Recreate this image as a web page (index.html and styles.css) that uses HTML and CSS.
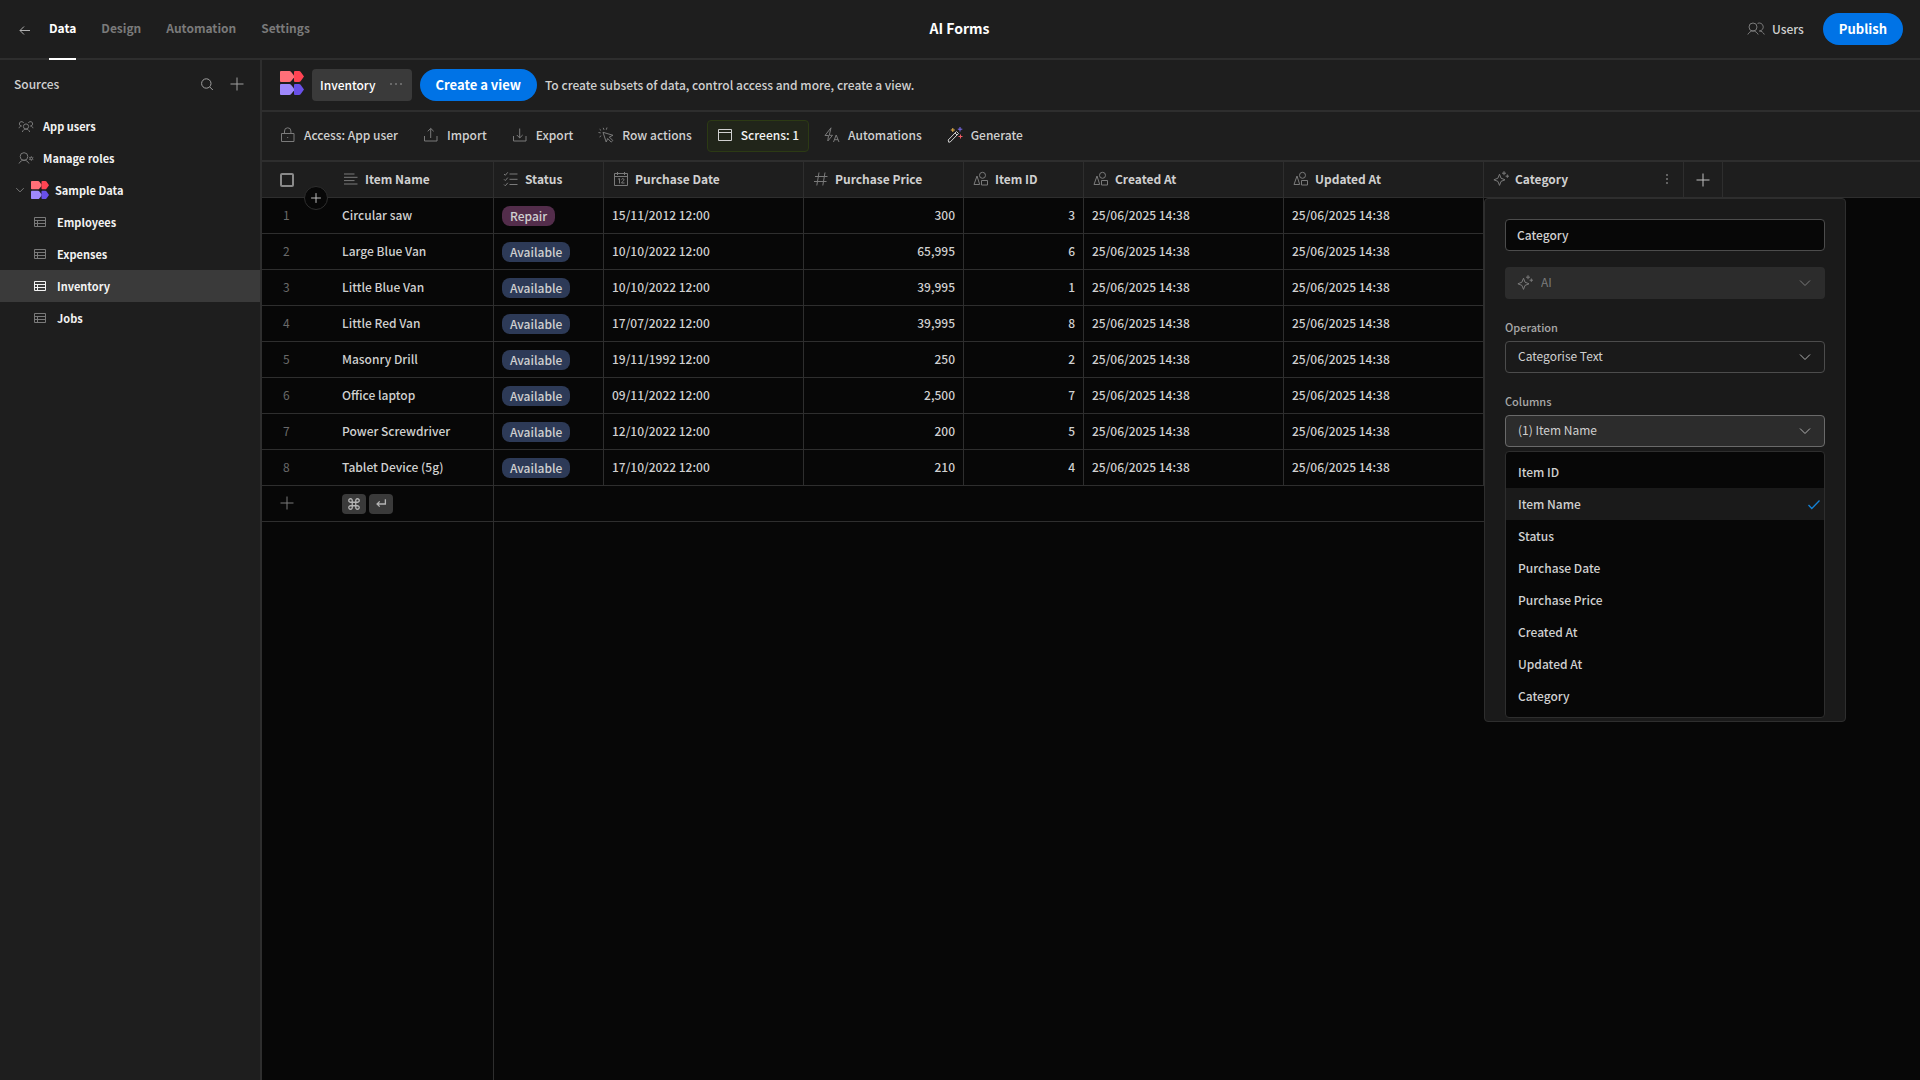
FILE: index.html
```html
<!DOCTYPE html>
<html lang="en">
<head>
<meta charset="utf-8">
<title>AI Forms</title>
<meta name="viewport" content="width=device-width, initial-scale=1">
<link rel="stylesheet" href="styles.css">
</head>
<body>
<svg class="sprite" aria-hidden="true">
  <symbol id="logo" viewBox="0 0 24 24">
    <path fill="#ff6f78" d="M0 1a1 1 0 0 1 1-1h8.500a2 2 0 0 1 1.500.7L14 4.500v2L11 10.300a2 2 0 0 1-1.500.7H1a1 1 0 0 1-1-1z"/>
    <path fill="#ff4453" d="M14 1a1 1 0 0 1 1-1h4a2 2 0 0 1 1.600.8L24 5.500l-3.400 4.700A2 2 0 0 1 19 11h-4a1 1 0 0 1-1-1z"/>
    <path fill="#9e88fb" d="M0 14a1 1 0 0 1 1-1h8.500a2 2 0 0 1 1.500.7l3 3.800v2l-3 3.800a2 2 0 0 1-1.500.7H1a1 1 0 0 1-1-1z"/>
    <path fill="#6950e8" d="M14 14a1 1 0 0 1 1-1h4a2 2 0 0 1 1.600.8l3.400 4.700-3.400 4.700A2 2 0 0 1 19 24h-4a1 1 0 0 1-1-1z"/>
  </symbol>
  <symbol id="plus" viewBox="0 0 16 16"><path d="M8 1.500v13M1.500 8h13"/></symbol>
  <symbol id="chevron" viewBox="0 0 16 16"><path d="M3 5.500 8 10.500 13 5.500"/></symbol>
  <symbol id="table" viewBox="0 0 16 16"><path d="M2.500 3.500h11v9h-11zM2.500 6.500h11M2.500 9.500h11M5.500 6.500v6"/></symbol>
  <symbol id="users" viewBox="0 0 18 16"><circle cx="6" cy="6" r="4"/><path d="M.8 13.500C2 11.300 3.800 10 6 10s4 1.300 5.200 3.500M10.500 2.400A4 4 0 1 1 12.300 10c2.200 0 3.900 1.300 5 3.500"/></symbol>
  <symbol id="shapes" viewBox="0 0 16 16"><circle cx="9.500" cy="4.300" r="3"/><path d="M4 5 1 13.500h5.700zM8.500 9.500h6v4.500h-6z"/></symbol>
  <symbol id="sparkle" viewBox="0 0 16 16"><path d="M6.500 3.200 8 7.200l4 1.600-4 1.600-1.500 4-1.600-4-4-1.600 4-1.600zM11 .2v4M9 2.200h4M14.300 3.500v3.400M12.600 5.200H16"/></symbol>
</svg>

<header class="topbar">
  <nav class="tabs" aria-label="Workspace">
    <a class="back" href="#" aria-label="Back"><svg class="icon" viewBox="0 0 16 16"><path d="M14 8.500H4M8 4.500l-4 4 4 4"/></svg></a>
    <a class="tab tab-active" href="#">Data</a>
    <a class="tab" href="#">Design</a>
    <a class="tab" href="#">Automation</a>
    <a class="tab" href="#">Settings</a>
  </nav>
  <h1 class="app-name">AI Forms</h1>
  <div class="top-actions">
    <button class="users-button" type="button"><svg class="icon icon-wide"><use href="#users"/></svg>Users</button>
    <button class="cta publish" type="button">Publish</button>
  </div>
</header>

<div class="workspace">
  <aside class="sidebar">
    <div class="sidebar-head">
      <h2 class="sidebar-title">Sources</h2>
      <button class="icon-button" type="button" aria-label="Search"><svg class="icon" viewBox="0 0 16 16"><circle cx="7.300" cy="7.500" r="4.700"/><path d="m10.800 11 3 3"/></svg></button>
      <button class="icon-button" type="button" aria-label="Add source"><svg class="icon"><use href="#plus"/></svg></button>
    </div>
    <nav class="source-list" aria-label="Sources">
      <a class="source" href="#"><svg class="icon" viewBox="0 0 16 16"><circle cx="8" cy="8.500" r="2.600"/><path d="M4.300 14C5 12 6.300 11.100 8 11.100s3 .9 3.700 2.900M1 10.200C1.600 8.500 2.300 8 3.500 8A2.200 2.200 0 1 1 5.600 5M15 10.200C14.400 8.500 13.700 8 12.500 8a2.200 2.200 0 1 0-2.100-3"/></svg>App users</a>
      <a class="source" href="#"><svg class="icon" viewBox="0 0 16 16"><circle cx="6" cy="6.500" r="3.800"/><path d="M1 13.500c1.200-2.200 2.800-3.200 5-3.200s3.800 1 5 3.200"/><circle cx="13.300" cy="8.500" r="1.200"/><path d="M13.300 6.300v1M13.300 9.700v1M11.300 7.400l.9.500M14.400 9.100l.9.500M15.300 7.400l-.9.500M12.200 9.100l-.9.500"/></svg>Manage roles</a>
      <a class="source source-group" href="#"><svg class="icon icon-small"><use href="#chevron"/></svg><svg class="logo-small"><use href="#logo"/></svg>Sample Data</a>
      <a class="source source-table" href="#"><svg class="icon"><use href="#table"/></svg>Employees</a>
      <a class="source source-table" href="#"><svg class="icon"><use href="#table"/></svg>Expenses</a>
      <a class="source source-table source-active" href="#"><svg class="icon"><use href="#table"/></svg>Inventory</a>
      <a class="source source-table" href="#"><svg class="icon"><use href="#table"/></svg>Jobs</a>
    </nav>
  </aside>

  <main class="content">
    <div class="view-bar">
      <svg class="logo"><use href="#logo"/></svg>
      <button class="view-tab" type="button">Inventory<svg class="icon dots" viewBox="0 0 16 16"><circle cx="3" cy="7" r="1"/><circle cx="8" cy="7" r="1"/><circle cx="13" cy="7" r="1"/></svg></button>
      <button class="cta" type="button">Create a view</button>
      <p class="view-hint">To create subsets of data, control access and more, create a view.</p>
    </div>

    <div class="toolbar">
      <button class="tool" type="button"><svg class="icon" viewBox="0 0 16 16"><path d="M1.500 6.500h12.500v8H1.500zM4.500 6.500V4a3.200 3.200 0 0 1 6.400 0v2.500M7.700 10v1"/></svg>Access: App user</button>
      <button class="tool" type="button"><svg class="icon" viewBox="0 0 16 16"><path d="M1.500 9v5H14V9M7.700 11V1.500M4.800 4.300l2.900-2.900 3 2.900"/></svg>Import</button>
      <button class="tool" type="button"><svg class="icon" viewBox="0 0 16 16"><path d="M1.500 9v5H14V9M7.700 1.500v9.500M4.800 8l2.900 2.900 3-2.900"/></svg>Export</button>
      <button class="tool" type="button"><svg class="icon" viewBox="0 0 16 16"><path d="m5 5.300 10 3-3.700 1.700 3.500 3.500-1.600 1.600-3.500-3.600L8.200 15zM5.200.800l.8 2M9 .500l-.7 2.200M.500 5.500l2.200.4M1.500 10l1.700-1.200M1.600 2.200l1.500 1.300"/></svg>Row actions</button>
      <button class="tool tool-active" type="button"><svg class="icon" viewBox="0 0 16 16"><path d="M1.500 2.500h13v11h-13zM1.500 5.500h13"/></svg>Screens: 1</button>
      <button class="tool" type="button"><svg class="icon" viewBox="0 0 16 16"><path d="M7 .800 1 8.500h3.500L3.800 14l4.700-5.700H5.300zM9.500 15l2.700-7 2.800 7M10.500 12.700h3.500"/></svg>Automations</button>
      <button class="tool" type="button"><svg class="icon" viewBox="0 0 16 16"><g class="wand"><path d="m1.200 13 8.300-8.500 2 2-8.300 8.500-1.500.2zM8 6l2 2"/></g><path stroke="#e8b34a" d="M5.800 1v4M3.800 3h4"/><path stroke="#7b6cf0" d="M13 0v4.500M10.800 2.200h4.500"/><path stroke="#f05a63" d="M13.500 7.500v4M11.500 9.500h4"/></svg>Generate</button>
    </div>

    <section class="grid" aria-label="Inventory rows">
      <table class="rows">
        <colgroup>
          <col class="col-index"><col class="col-name"><col class="col-status"><col class="col-date"><col class="col-price"><col class="col-id"><col class="col-date"><col class="col-date"><col class="col-date"><col class="col-add"><col>
        </colgroup>
        <thead>
          <tr>
            <th class="index head-index"><input class="tick" type="checkbox" aria-label="Select all rows"><button class="insert" type="button" aria-label="Insert row"><svg class="icon icon-small"><use href="#plus"/></svg></button></th>
            <th class="cell"><span class="head"><svg class="icon" viewBox="0 0 16 16"><path d="M1 3h10.500M1 6.300h13.500M1 9.600h10.500M1 13h13.500"/></svg>Item Name</span></th>
            <th class="cell"><span class="head"><svg class="icon" viewBox="0 0 16 16"><path d="M6.500 3h8M6.500 8.300h8M6.500 13.500h8M1 3l1.300 1.300L4.800 1.300M1 8.300l1.300 1.300 2.500-3M1 13.500l1.300 1.300 2.500-3"/></svg>Status</span></th>
            <th class="cell"><span class="head"><svg class="icon" viewBox="0 0 16 16"><path d="M1.500 2.500h13v12h-13zM1.500 5.500h13M4.500 1v3M11.500 1v3M5 8.200l1.500-.7v5M8.500 8.500c.4-1.200 2.500-1.200 2.500.3 0 1.200-2.300 2-2.500 3.200h3"/></svg>Purchase Date</span></th>
            <th class="cell"><span class="head"><svg class="icon" viewBox="0 0 16 16"><path d="M6 1.500 3.800 14.500M12 1.500 9.800 14.500M2 5.500h12.500M1 10.500h12.500"/></svg>Purchase Price</span></th>
            <th class="cell"><span class="head"><svg class="icon"><use href="#shapes"/></svg>Item ID</span></th>
            <th class="cell"><span class="head"><svg class="icon"><use href="#shapes"/></svg>Created At</span></th>
            <th class="cell"><span class="head"><svg class="icon"><use href="#shapes"/></svg>Updated At</span></th>
            <th class="cell head-category"><span class="head"><svg class="icon"><use href="#sparkle"/></svg>Category<svg class="icon dots push" viewBox="0 0 16 16"><circle cx="8" cy="4" r="1"/><circle cx="8" cy="8" r="1"/><circle cx="8" cy="12" r="1"/></svg></span>
              <form class="popover">
                <input class="field" type="text" value="Category" aria-label="Column name">
                <div class="picker picker-disabled">
                  <svg class="icon picker-lead"><use href="#sparkle"/></svg>
                  <select class="field field-lead" aria-label="Column type" disabled><option>AI</option></select>
                  <svg class="icon picker-arrow"><use href="#chevron"/></svg>
                </div>
                <div class="group">
                  <label class="label" for="operation">Operation</label>
                  <div class="picker">
                    <select class="field" id="operation"><option>Categorise Text</option></select>
                    <svg class="icon picker-arrow"><use href="#chevron"/></svg>
                  </div>
                </div>
                <div class="group">
                  <label class="label" for="columns">Columns</label>
                  <div class="picker picker-open">
                    <select class="field" id="columns"><option>(1) Item Name</option></select>
                    <svg class="icon picker-arrow"><use href="#chevron"/></svg>
                  </div>
                </div>
                <ul class="menu" role="listbox" aria-label="Columns">
                  <li class="option" role="option">Item ID</li>
                  <li class="option option-selected" role="option" aria-selected="true">Item Name<svg class="icon check" viewBox="0 0 16 16"><path d="m2.500 9 3.300 3.500 7.700-8"/></svg></li>
                  <li class="option" role="option">Status</li>
                  <li class="option" role="option">Purchase Date</li>
                  <li class="option" role="option">Purchase Price</li>
                  <li class="option" role="option">Created At</li>
                  <li class="option" role="option">Updated At</li>
                  <li class="option" role="option">Category</li>
                </ul>
              </form>
            </th>
            <th class="cell head-add"><button class="icon-button add-column" type="button" aria-label="Add column"><svg class="icon"><use href="#plus"/></svg></button></th>
            <th class="rest"></th>
          </tr>
        </thead>
        <tbody>
          <tr><td class="index">1</td><td class="cell">Circular saw</td><td class="cell"><span class="pill pill-repair">Repair</span></td><td class="cell">15/11/2012 12:00</td><td class="cell number">300</td><td class="cell number">3</td><td class="cell">25/06/2025 14:38</td><td class="cell">25/06/2025 14:38</td><td class="cell"></td></tr>
          <tr><td class="index">2</td><td class="cell">Large Blue Van</td><td class="cell"><span class="pill">Available</span></td><td class="cell">10/10/2022 12:00</td><td class="cell number">65,995</td><td class="cell number">6</td><td class="cell">25/06/2025 14:38</td><td class="cell">25/06/2025 14:38</td><td class="cell"></td></tr>
          <tr><td class="index">3</td><td class="cell">Little Blue Van</td><td class="cell"><span class="pill">Available</span></td><td class="cell">10/10/2022 12:00</td><td class="cell number">39,995</td><td class="cell number">1</td><td class="cell">25/06/2025 14:38</td><td class="cell">25/06/2025 14:38</td><td class="cell"></td></tr>
          <tr><td class="index">4</td><td class="cell">Little Red Van</td><td class="cell"><span class="pill">Available</span></td><td class="cell">17/07/2022 12:00</td><td class="cell number">39,995</td><td class="cell number">8</td><td class="cell">25/06/2025 14:38</td><td class="cell">25/06/2025 14:38</td><td class="cell"></td></tr>
          <tr><td class="index">5</td><td class="cell">Masonry Drill</td><td class="cell"><span class="pill">Available</span></td><td class="cell">19/11/1992 12:00</td><td class="cell number">250</td><td class="cell number">2</td><td class="cell">25/06/2025 14:38</td><td class="cell">25/06/2025 14:38</td><td class="cell"></td></tr>
          <tr><td class="index">6</td><td class="cell">Office laptop</td><td class="cell"><span class="pill">Available</span></td><td class="cell">09/11/2022 12:00</td><td class="cell number">2,500</td><td class="cell number">7</td><td class="cell">25/06/2025 14:38</td><td class="cell">25/06/2025 14:38</td><td class="cell"></td></tr>
          <tr><td class="index">7</td><td class="cell">Power Screwdriver</td><td class="cell"><span class="pill">Available</span></td><td class="cell">12/10/2022 12:00</td><td class="cell number">200</td><td class="cell number">5</td><td class="cell">25/06/2025 14:38</td><td class="cell">25/06/2025 14:38</td><td class="cell"></td></tr>
          <tr><td class="index">8</td><td class="cell">Tablet Device (5g)</td><td class="cell"><span class="pill">Available</span></td><td class="cell">17/10/2022 12:00</td><td class="cell number">210</td><td class="cell number">4</td><td class="cell">25/06/2025 14:38</td><td class="cell">25/06/2025 14:38</td><td class="cell"></td></tr>
          <tr><td class="index"><button class="icon-button new-row" type="button" aria-label="Add row"><svg class="icon"><use href="#plus"/></svg></button></td><td class="cell"><span class="keys"><kbd class="key"><svg class="icon key-icon" viewBox="0 0 16 16"><path d="M6 6H4.300A2 2 0 1 1 6 4.300v7.400A2 2 0 1 1 4.300 10h7.400A2 2 0 1 1 10 11.700V4.300A2 2 0 1 1 11.700 6z"/></svg></kbd><kbd class="key"><svg class="icon key-icon" viewBox="0 0 16 16"><path d="M13 2.500V8H3.500M6.500 5l-3 3 3 3"/></svg></kbd></span></td><td class="cell" colspan="7"></td></tr>
        </tbody>
      </table>
      <div class="below-rows"></div>
    </section>
  </main>
</div>
</body>
</html>
```
FILE: styles.css
```css
:root {
  --panel: #1e1e1e;
  --ground: #070707;
  --line: #2e2e2e;
  --raised: #3a3a3a;
  --text: #d0d0d0;
  --bright: #f2f2f2;
  --muted: #7a7a7a;
  --blue: #0073e6;
}

* { box-sizing: border-box; }

body {
  margin: 0;
  min-height: 100vh;
  display: flex;
  flex-direction: column;
  background: var(--ground);
  color: var(--text);
  font: 500 12px/20px "Noto Sans CJK SC", "Noto Sans", sans-serif;
}

h1, h2, p, ul { margin: 0; padding: 0; }
a { color: inherit; text-decoration: none; }
button, input, select { font: inherit; color: inherit; margin: 0; }
button { border: 0; background: none; padding: 0; cursor: pointer; white-space: nowrap; }

.sprite { display: none; }
.icon {
  width: 16px;
  height: 16px;
  flex: none;
  fill: none;
  stroke: var(--muted);
  stroke-width: 1;
}
.icon-small { width: 12px; height: 12px; stroke-width: 1.3; }
.icon-wide { width: 18px; }
.dots { fill: var(--muted); stroke: none; }
.icon-button { display: flex; }
.logo { width: 24px; height: 24px; flex: none; }
.logo-small { width: 18px; height: 18px; flex: none; }

.cta {
  height: 32px;
  padding: 0 16px 1px;
  border-radius: 16px;
  background: var(--blue);
  color: #fff;
  font-size: 13px;
  font-weight: 700;
}

/* Top bar */
.topbar {
  height: 60px;
  display: grid;
  grid-template-columns: 1fr auto 1fr;
  align-items: center;
  padding: 0 17px 0 16px;
  background: var(--panel);
  border-bottom: 2px solid var(--line);
}
.tabs { display: flex; align-items: center; align-self: stretch; gap: 25px; margin-bottom: -2px; }
.back { display: flex; margin-right: -8px; }
.back .icon { stroke: #b0b0b0; }
.tab {
  height: 60px;
  padding: 18px 0 20px;
  border-bottom: 2px solid transparent;
  color: var(--muted);
  font-weight: 700;
}
.tab-active { color: #fff; border-color: #fff; }
.app-name { padding-bottom: 2px; font-size: 14px; font-weight: 700; color: #fff; }
.top-actions { display: flex; justify-content: flex-end; align-items: center; gap: 19px; }
.users-button { display: flex; align-items: center; gap: 7px; padding-bottom: 1px; }

/* Sidebar */
.workspace { flex: 1; display: flex; }
.sidebar { width: 262px; flex: none; background: var(--panel); border-right: 2px solid var(--line); }
.sidebar-head { display: flex; align-items: center; gap: 14px; height: 50px; padding: 0 15px 2px 14px; }
.sidebar-title { flex: 1; font-size: 12px; font-weight: 500; }
.sidebar-head .icon { stroke: #a0a0a0; }
.source {
  height: 32px;
  display: flex;
  align-items: center;
  gap: 9px;
  padding: 0 18px;
  color: var(--bright);
  font-size: 11px;
  font-weight: 700;
}
.source-group { gap: 6px; padding-left: 14px; }
.source-group .icon { margin-right: -1px; }
.source-table { padding-left: 32px; }
.source-active { background: var(--raised); }
.source-active .icon { stroke: var(--bright); }

/* View bar and toolbar */
.content { flex: 1; min-width: 0; display: flex; flex-direction: column; }
.view-bar, .toolbar {
  display: flex;
  align-items: center;
  background: var(--panel);
  border-bottom: 2px solid var(--line);
}
.view-bar { height: 52px; gap: 8px; padding: 0 18px; }
.view-bar .logo { margin-bottom: 4px; }
.view-tab {
  display: flex;
  align-items: center;
  gap: 12px;
  height: 32px;
  padding: 0 8px;
  border-radius: 4px;
  background: var(--raised);
  color: #fff;
}
.toolbar { height: 50px; gap: 5px; padding: 0 8px; }
.tool {
  height: 32px;
  display: flex;
  align-items: center;
  gap: 8px;
  padding: 0 9px 2px;
  border: 1px solid transparent;
  border-radius: 4px;
}
.tool-active { background: #21251a; border-color: #2c3a14; color: var(--bright); }
.tool-active .icon, .wand { stroke: var(--text); }

/* Grid */
.grid { flex: 1; display: flex; flex-direction: column; }
.rows { width: 100%; table-layout: fixed; border-spacing: 0; }
.col-index { width: 72px; }
.col-name { width: 160px; }
.col-status { width: 110px; }
.col-date { width: 200px; }
.col-price { width: 160px; }
.col-id { width: 120px; }
.col-add { width: 39px; }
.rows th, .rows td { height: 36px; border-bottom: 1px solid var(--line); text-align: left; }
.rows th { background: var(--panel); font-weight: 700; }
.index { padding: 0 24px 0 0; }
.rows td.index { padding: 0 24px 2px 21px; color: #6a6a6a; font-weight: 400; }
.cell { padding: 0 8px 2px; border-right: 1px solid var(--line); color: var(--text); }
.cell:has(.pill), .cell:has(.keys) { padding-bottom: 0; }
.rows .number { text-align: right; }
.rest { padding: 0; }
.head { display: flex; align-items: center; gap: 6px; padding-left: 1px; }
.push { margin-left: auto; }
.head-index, .head-category { position: relative; }
.tick {
  appearance: none;
  display: block;
  width: 14px;
  height: 14px;
  margin-left: 18px;
  border: 2px solid #8a8a8a;
  border-radius: 2px;
}
.insert {
  position: absolute;
  left: 42px;
  bottom: -13px;
  width: 24px;
  height: 24px;
  display: grid;
  place-items: center;
  border: 1px solid var(--line);
  border-radius: 50%;
  background: var(--ground);
}
.insert .icon, .add-column .icon { stroke: #c0c0c0; }
.rows .head-add { padding: 0 11px; }
.new-row { margin-left: -4px; }
.pill {
  display: block;
  width: fit-content;
  height: 20px;
  padding: 0 8px;
  border-radius: 8px;
  background: #2d3a57;
}
.pill-repair { background: #532d4b; }
.keys { display: flex; gap: 3px; }
.key { width: 24px; height: 20px; display: grid; place-items: center; border-radius: 4px; background: var(--raised); }
.key-icon { width: 14px; height: 14px; stroke: #b4b4b4; stroke-width: 1.5; }
.below-rows { flex: 1; width: 232px; border-right: 1px solid var(--line); }

/* Column editor */
.popover {
  position: absolute;
  top: 36px;
  left: 0;
  z-index: 1;
  width: 362px;
  padding: 20px 20px 3px;
  display: flex;
  flex-direction: column;
  gap: 16px;
  border: 1px solid var(--line);
  border-radius: 4px;
  background: #1a1a1a;
  font-weight: 500;
}
.field {
  appearance: none;
  width: 100%;
  height: 32px;
  padding: 0 11px 2px;
  border: 1px solid #4c4c4c;
  border-radius: 4px;
  background: var(--ground);
  opacity: 1;
}
.picker { display: grid; grid-template-columns: 32px 1fr 32px; align-items: center; }
.picker .field { grid-area: 1 / 1 / 2 / 4; padding: 0 12px 2px; background: transparent; font-weight: 400; }
.picker-arrow { grid-area: 1 / 3; justify-self: center; stroke: #b0b0b0; pointer-events: none; margin-right: 8px; }
.picker-lead { grid-area: 1 / 1; justify-self: end; }
.picker-disabled .field { padding-left: 35px; border-color: transparent; background: #2c2c2c; color: var(--muted); }
.picker-disabled .icon { z-index: 1; stroke: var(--muted); }
.picker-disabled .picker-lead { margin-right: 4px; }
.picker-open .field { background: #2c2c2c; border-color: #6a6a6a; }
.group { display: flex; flex-direction: column; gap: 4px; padding-top: 2px; }
.label { font-size: 11px; color: #a8a8a8; }
.menu {
  margin-top: -12px;
  padding: 4px 0 5px;
  border: 1px solid var(--line);
  border-radius: 4px;
  background: var(--ground);
  list-style: none;
}
.option { height: 32px; display: flex; align-items: center; justify-content: space-between; padding: 0 2px 1px 12px; }
.option-selected { background: #1a1a1a; }
.check { stroke: #1482d6; stroke-width: 1.3; }
```
